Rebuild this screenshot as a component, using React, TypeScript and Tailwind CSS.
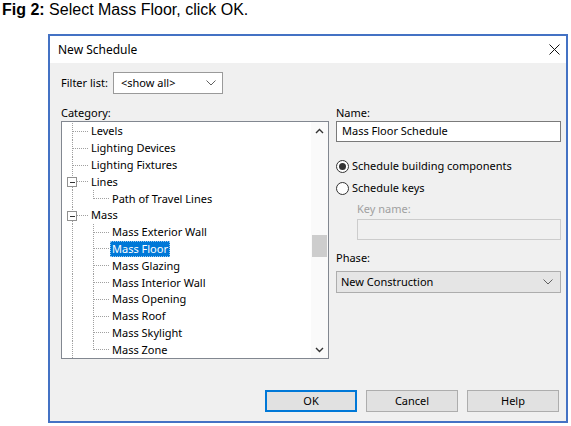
import React from "react";

type Row = {
  label: string;
  level: 0 | 1;
  expander?: boolean;
  last?: boolean;
  selected?: boolean;
};

const rows: Row[] = [
  { label: "Levels", level: 0 },
  { label: "Lighting Devices", level: 0 },
  { label: "Lighting Fixtures", level: 0 },
  { label: "Lines", level: 0, expander: true },
  { label: "Path of Travel Lines", level: 1, last: true },
  { label: "Mass", level: 0, expander: true },
  { label: "Mass Exterior Wall", level: 1 },
  { label: "Mass Floor", level: 1, selected: true },
  { label: "Mass Glazing", level: 1 },
  { label: "Mass Interior Wall", level: 1 },
  { label: "Mass Opening", level: 1 },
  { label: "Mass Roof", level: 1 },
  { label: "Mass Skylight", level: 1 },
  { label: "Mass Zone", level: 1, last: true },
];

const dot = "#a0a0a0";

function Connector({ row }: { row: Row }) {
  const w = row.level === 0 ? 27 : 48;
  return (
    <svg width={w} height="17" className="shrink-0" shapeRendering="crispEdges">
      {/* root trunk */}
      <line x1="10.5" y1="0" x2="10.5" y2="17" stroke={dot} strokeDasharray="1 1" />
      {row.level === 0 && (
        <line x1="11" y1="8.5" x2="27" y2="8.5" stroke={dot} strokeDasharray="1 1" />
      )}
      {row.level === 1 && (
        <>
          <line
            x1="31.5"
            y1="0"
            x2="31.5"
            y2={row.last ? 9 : 17}
            stroke={dot}
            strokeDasharray="1 1"
          />
          <line x1="32" y1="8.5" x2="48" y2="8.5" stroke={dot} strokeDasharray="1 1" />
        </>
      )}
      {row.expander && (
        <>
          <rect x="5.5" y="4.5" width="9" height="9" fill="#fff" stroke="#919191" />
          <line x1="7.5" y1="9" x2="12.5" y2="9" stroke="#333" />
        </>
      )}
    </svg>
  );
}

function Chevron({ up, down }: { up?: boolean; down?: boolean }) {
  return (
    <svg width="9" height="6" viewBox="0 0 9 6">
      {up && <path d="M1 5 L4.5 1.5 L8 5" fill="none" stroke="#333" strokeWidth="1.4" />}
      {down && <path d="M1 1 L4.5 4.5 L8 1" fill="none" stroke="#333" strokeWidth="1.4" />}
    </svg>
  );
}

function SelectArrow() {
  return (
    <svg width="10" height="6" viewBox="0 0 10 6">
      <path d="M0.5 0.5 L5 5 L9.5 0.5" fill="none" stroke="#606060" strokeWidth="1" />
    </svg>
  );
}

function Radio({ checked, label }: { checked?: boolean; label: string }) {
  return (
    <div className="flex items-center h-[16px] gap-[3px]">
      <div className="w-[13px] h-[13px] rounded-full border border-[#333] bg-white flex items-center justify-center">
        {checked && <div className="w-[7px] h-[7px] rounded-full bg-[#333]" />}
      </div>
      <span>{label}</span>
    </div>
  );
}

export default function App() {
  return (
    <div className="w-[571px] h-[426px] bg-white overflow-hidden">
      {/* Caption */}
      <div className="h-[34px] pl-[2px] text-[16px] leading-[19px] text-black font-['Liberation_Sans',Arial,sans-serif]">
        <span className="font-bold">Fig 2:</span> Select Mass Floor, click OK.
      </div>

      {/* Dialog */}
      <div className="ml-[48px] w-[520px] border-2 border-[#4472c4] text-[11px] text-black font-['Noto_Sans',sans-serif]">
        {/* Title bar */}
        <div className="h-[27px] bg-white flex items-center justify-between pl-[8px] pr-[6px]">
          <span className="text-[12px]">New Schedule</span>
          <svg width="11" height="11" viewBox="0 0 11 11">
            <path d="M0.5 0.5 L10.5 10.5 M10.5 0.5 L0.5 10.5" stroke="#111" strokeWidth="1" />
          </svg>
        </div>

        {/* Body */}
        <div className="bg-[#f0f0f0] pl-[11px] pr-[5px] pt-[9px] pb-[9px]">
          {/* Filter list */}
          <div className="flex items-center h-[22px]">
            <span className="w-[52px]">Filter list:</span>
            <div className="w-[110px] h-[22px] bg-white border border-[#9a9a9a] flex items-center justify-between pl-[7px] pr-[6px]">
              <span>&lt;show all&gt;</span>
              <SelectArrow />
            </div>
          </div>

          <div className="flex gap-[7px] mt-[10px]">
            {/* Category */}
            <div className="w-[268px]">
              <div className="h-[17px] leading-[17px]">Category:</div>
              <div className="h-[238px] border border-[#828790] bg-white flex">
                <div className="flex-1 pt-[1px] overflow-hidden">
                  {rows.map((row) => (
                    <div key={row.label} className="flex items-center h-[16.8px]">
                      <Connector row={row} />
                      <span
                        className={
                          row.selected
                            ? "px-[2px] leading-[16px] bg-[#0078d7] text-white outline outline-1 outline-dotted outline-[#99c9ef] -outline-offset-1"
                            : "px-[2px] leading-[16px]"
                        }
                      >
                        {row.label}
                      </span>
                    </div>
                  ))}
                </div>
                {/* Scrollbar */}
                <div className="w-[17px] flex flex-col bg-[#fafafa]">
                  <div className="h-[17px] flex items-center justify-center">
                    <Chevron up />
                  </div>
                  <div className="flex-1 flex justify-center">
                    <div className="w-[15px] h-[22px] mt-[96px] bg-[#cdcdcd]" />
                  </div>
                  <div className="h-[17px] flex items-center justify-center">
                    <Chevron down />
                  </div>
                </div>
              </div>
            </div>

            {/* Right column */}
            <div className="w-[225px]">
              <div className="h-[17px] leading-[17px]">Name:</div>
              <div className="h-[21px] bg-white border border-[#7a7a7a] flex items-center pl-[5px]">
                Mass Floor Schedule
              </div>

              <div className="mt-[16px]">
                <Radio checked label="Schedule building components" />
              </div>
              <div className="mt-[6px]">
                <Radio label="Schedule keys" />
              </div>

              <div className="ml-[21px] mt-[5px] h-[16px] leading-[16px] text-[#a0a0a0]">
                Key name:
              </div>
              <div className="ml-[21px] mt-[2px] h-[21px] bg-[#f0f0f0] border border-[#cccccc]" />

              <div className="mt-[10px] h-[16px] leading-[16px]">Phase:</div>
              <div className="mt-[5px] h-[22px] bg-[#e5e5e5] border border-[#adadad] flex items-center justify-between pl-[4px] pr-[7px]">
                <span>New Construction</span>
                <SelectArrow />
              </div>
            </div>
          </div>

          {/* Buttons */}
          <div className="flex justify-end gap-[9px] mt-[31px] pr-[2px]">
            <button className="w-[92px] h-[22px] bg-[#e1e1e1] border border-[#0078d7] shadow-[inset_0_0_0_1px_#0078d7]">
              OK
            </button>
            <button className="w-[92px] h-[22px] bg-[#e1e1e1] border border-[#adadad]">
              Cancel
            </button>
            <button className="w-[92px] h-[22px] bg-[#e1e1e1] border border-[#adadad]">
              Help
            </button>
          </div>
        </div>
      </div>
    </div>
  );
}
